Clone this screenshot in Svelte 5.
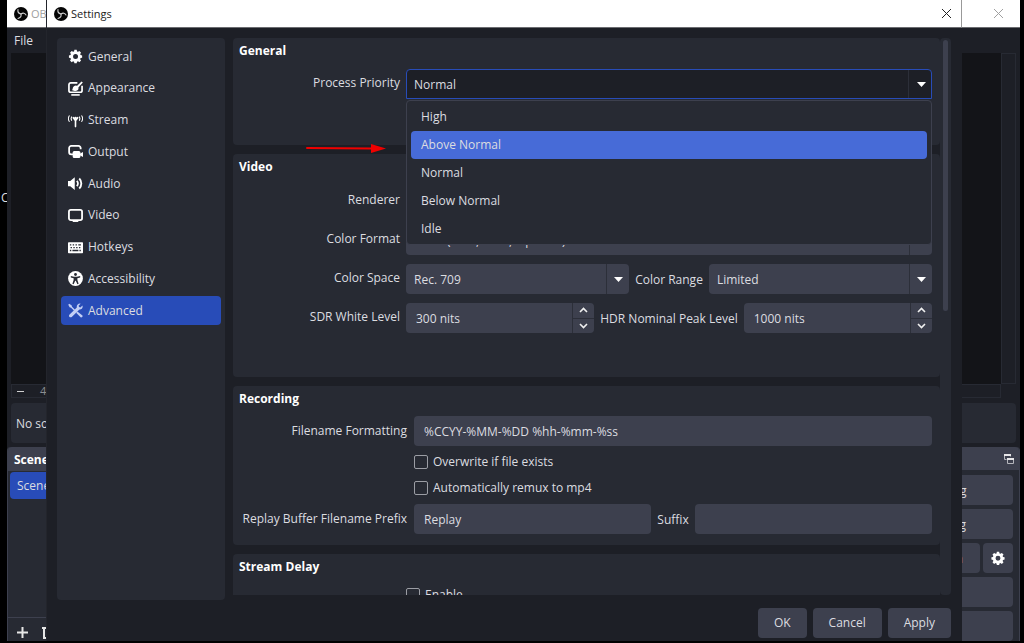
<script lang="ts">
	const pages = [
		{ id: 'general', label: 'General' },
		{ id: 'appearance', label: 'Appearance' },
		{ id: 'stream', label: 'Stream' },
		{ id: 'output', label: 'Output' },
		{ id: 'audio', label: 'Audio' },
		{ id: 'video', label: 'Video' },
		{ id: 'hotkeys', label: 'Hotkeys' },
		{ id: 'accessibility', label: 'Accessibility' },
		{ id: 'advanced', label: 'Advanced' }
	];
	const priorities = ['High', 'Above Normal', 'Normal', 'Below Normal', 'Idle'];

	let page = $state('advanced');
	let priority = $state('Normal');
	let hovered = $state('Above Normal');
	let open = $state(true);

	let sdrWhite = $state(300);
	let hdrPeak = $state(1000);
	let filename = $state('%CCYY-%MM-%DD %hh-%mm-%ss');
	let prefix = $state('Replay');
	let suffix = $state('');

	function choose(name: string) {
		priority = name;
		open = false;
	}
</script>

{#snippet logo()}
	<svg class="logo" viewBox="0 0 28 28" aria-hidden="true">
		<circle cx="14" cy="14" r="14" fill="#050505" />
		<g fill="none" stroke="#d0d0d0" stroke-width="2.2" stroke-linecap="round">
			<path d="M8 5c-1 5 1 8 6 9" />
			<path d="M14 14c4-3 8-2 10 2" />
			<path d="M14 14c1 5-1 8-6 9" />
		</g>
	</svg>
{/snippet}

{#snippet close()}
	<svg width="11" height="11" viewBox="0 0 11 11" aria-hidden="true">
		<path d="M1 1l9 9M10 1l-9 9" fill="none" stroke="currentColor" />
	</svg>
{/snippet}

{#snippet gear()}
	<path
		fill-rule="evenodd"
		d="M6.6 1h2.8l.4 1.9 1.2.5 1.7-1.1 2 2-1.1 1.7.5 1.2 1.9.4v2.8l-1.9.4-.5 1.2 1.1 1.7-2 2-1.7-1.1-1.2.5-.4 1.9H6.6l-.4-1.9-1.2-.5-1.7 1.1-2-2 1.1-1.7-.5-1.2L0 10.4V7.6l1.9-.4.5-1.2L1.3 4.3l2-2L5 3.4l1.2-.5zM8 5.800a3 3 0 1 0 0 6 3 3 0 0 0 0-6z"
	/>
{/snippet}

{#snippet icon(id: string)}
	<svg class="icon" viewBox="0 0 16 16" fill="currentColor" aria-hidden="true">
		{#if id === 'general'}
			<g transform="translate(1 0) scale(.88 .9)">{@render gear()}</g>
		{:else if id === 'appearance'}
			<path d="M10 2H3a2 2 0 0 0-2 2v6a2 2 0 0 0 2 2h10a2 2 0 0 0 2-2V5" fill="none" stroke="currentColor" stroke-width="1.8" />
			<path d="M14.4.4l1.4 1.2-5 5.6-1.8-1.4z" />
			<path d="M8.700 4.800a3.100 3.100 0 0 1 2.500 3.200c0 2-1.900 2.800-4 2.600-1.400-.1-2.500-.4-3.200-.9 1-.2.9-1.200 1.200-2.400.4-1.500 1.700-2.600 3.500-2.500z" />
			<path d="M3.500 14h9v1.700h-9z" />
		{:else if id === 'stream'}
			<g fill="none" stroke="currentColor" stroke-linecap="round">
				<path d="M1.400 3a5.500 5.500 0 0 0 0 6M14.600 3a5.500 5.500 0 0 1 0 6" stroke-width="1.100" />
				<path d="M3.800 4.200a3.600 3.600 0 0 0 0 3.600M12.200 4.200a3.600 3.600 0 0 1 0 3.600" stroke-width="1.200" />
				<path d="M5.700 5L8 8.200 10.300 5M8 8v6.500" stroke-width="1.700" />
			</g>
			<circle cx="8" cy="5.600" r="1.500" />
		{:else if id === 'output'}
			<path d="M6 11H3.500a2.300 2.300 0 0 1-2.300-2.300V4.300A2.300 2.300 0 0 1 3.500 2h7.700a2.300 2.300 0 0 1 2.300 2.300v1.200" fill="none" stroke="currentColor" stroke-width="1.900" />
			<rect x="5" y="7.400" width="8.200" height="7.400" rx="1.600" />
			<path d="M12.500 10.500L16 8.400v5.500l-3.500-2z" />
		{:else if id === 'audio'}
			<path d="M0 5.200h2.400L7.200 1.200v13.600l-4.800-4H0z" />
			<path d="M9.400 5.200a4 4 0 0 1 0 5.600M12 2.700a7.500 7.500 0 0 1 0 10.600" fill="none" stroke="currentColor" stroke-width="2" />
		{:else if id === 'video'}
			<rect x="1" y="2" width="14" height="11" rx="2" fill="none" stroke="currentColor" stroke-width="1.900" />
			<path d="M5 13.500h6v1.400H5z" />
		{:else if id === 'hotkeys'}
			<path
				fill-rule="evenodd"
				d="M.8 2.500h14.400q.8 0 .8.800v10q0 .8-.8.800H.8q-.8 0-.8-.8v-10q0-.8.8-.8zM2 4.500v1.300h1.500V4.500zm3 0v1.300h1.500V4.500zm3 0v1.300h1.500V4.500zm3 0v1.300h2.800V4.500zM2.700 7.500v1.300h1.500V7.500zm3 0v1.300h1.500V7.500zm3 0v1.300h1.500V7.500zm3 0v1.300h1.500V7.500zM2 10.500v1.400h1.500v-1.400zm2.700 0v1.400h6.400v-1.400zm7.500 0v1.400h1.500v-1.400z"
			/>
		{:else if id === 'accessibility'}
			<circle cx="8" cy="8" r="7.900" />
			<g fill="#272a33">
				<circle cx="8" cy="3.700" r="1.500" />
				<path d="M3 5.400l3.500.7h3L13 5.400v1.400l-3 .8v2l1.300 4-1.300.5-1.700-3.600h-.6L6 14.100l-1.300-.5 1.300-4v-2l-3-.8z" />
			</g>
		{:else}
			<path d="M1.200.9l2.600 1.400.5 1.700 3.400 3.400-1 1L3.300 5l-1.600-.6L.3 1.900z" />
			<path d="M13.400.7L11.300 3l.5 1.300 1.400.5 2.200-2.100c.9 2.500-.8 4.500-3.200 4.300L4 14.800c-1.500 1.300-3.800-.6-2.600-2.300l8-7.800C8.900 2.200 11.100.2 13.400.7z" />
			<path d="M10 9l5.400 4.300c.8 1-.9 2.700-1.900 1.900l-4.800-4.800z" />
		{/if}
	</svg>
{/snippet}

{#snippet caret()}
	<svg class="caret" viewBox="0 0 9 5" aria-hidden="true"><path d="M0 0h9L4.500 5z" fill="#fff" /></svg>
{/snippet}

{#snippet steps(change: (by: number) => void)}
	<span class="steps">
		<button type="button" aria-label="Increase" onclick={() => change(1)}>
			<svg width="9" height="6" viewBox="0 0 9 6"><path d="M1 5l3.500-3.500L8 5" /></svg>
		</button>
		<button type="button" aria-label="Decrease" onclick={() => change(-1)}>
			<svg width="9" height="6" viewBox="0 0 9 6"><path d="M1 1l3.500 3.500L8 1" /></svg>
		</button>
	</span>
{/snippet}

<div class="desktop">
	<span class="behind">C</span>

	<div class="main-window">
		<header class="titlebar inactive">
			{@render logo()}
			<span class="title">OBS</span>
			<button class="close" aria-label="Close OBS">{@render close()}</button>
		</header>
		<nav class="menubar"><a href="#file">File</a></nav>
		<div class="preview">
			<div class="canvas"></div>
			<div class="vbar"></div>
			<div class="hbar"><span class="minus"></span><span>46%</span></div>
		</div>
		<div class="context">No source selected</div>
		<div class="docks">
			<section class="dock scenes">
				<h2>Scenes</h2>
				<a class="scene" href="#scene">Scene</a>
				<div class="dock-tools">
					<svg width="13" height="13" viewBox="0 0 13 13"><path d="M6.500 1v11M1 6.500h11" /></svg>
					<svg width="12" height="13" viewBox="0 0 12 13"><path d="M0 2h12M2 2v10h8V2M4 1h4" /></svg>
				</div>
			</section>
			<section class="dock controls">
				<h2>
					<span>Controls</span>
					<svg width="10" height="10" viewBox="0 0 10 10" aria-hidden="true">
						<path d="M2.500 5.500h-2v-5h6v2M3.500 4.500h6v5h-6z" fill="none" stroke="#b5b6bc" />
						<path d="M0 0h7v2H0zM3 4h7v2H3z" fill="#e6e6e8" />
					</svg>
				</h2>
				<div class="control-list">
					<button>Start Streaming</button>
					<button>Start Recording</button>
					<div class="pair">
						<button>Start Virtual Camera</button>
						<button class="gear" aria-label="Configure virtual camera">
							<svg width="14" height="14" viewBox="0 0 16 17" fill="#fff">{@render gear()}</svg>
						</button>
					</div>
					<button>Studio Mode</button>
					<button aria-label="Open settings"></button>
				</div>
			</section>
		</div>
	</div>

	<div class="dialog" role="dialog" aria-label="Settings">
		<header class="titlebar">
			{@render logo()}
			<span class="title">Settings</span>
			<button class="close" aria-label="Close">{@render close()}</button>
		</header>

		<div class="body">
			<nav class="sidebar">
				<div class="pages">
					{#each pages as p}
						<button class:active={page === p.id} onclick={() => (page = p.id)}>
							{@render icon(p.id)}
							<span>{p.label}</span>
						</button>
					{/each}
				</div>
			</nav>

			<div class="scroller">
				<form class="groups">
					<section class="group general">
						<h3>General</h3>
						<div class="row">
							<label for="priority">Process Priority</label>
							<div class="combo" class:open>
								<select id="priority" bind:value={priority}>
									{#each priorities as name}
										<option>{name}</option>
									{/each}
								</select>
								{@render caret()}
								{#if open}
									<div class="popup" role="listbox" aria-label="Process Priority">
										{#each priorities as name}
											<button
												type="button"
												role="option"
												aria-selected={name === priority}
												class:hovered={hovered === name}
												onmouseenter={() => (hovered = name)}
												onclick={() => choose(name)}>{name}</button
											>
										{/each}
									</div>
								{/if}
							</div>
						</div>
					</section>

					<section class="group video">
						<h3>Video</h3>
						<div class="row">
							<label for="renderer">Renderer</label>
							<div class="combo">
								<select id="renderer"><option>Direct3D 11</option></select>
								{@render caret()}
							</div>
						</div>
						<div class="row">
							<label for="format">Color Format</label>
							<div class="combo">
								<select id="format"><option>NV12 (8-bit, 4:2:0, 2 planes)</option></select>
								{@render caret()}
							</div>
						</div>
						<div class="row">
							<label for="space">Color Space</label>
							<div class="fields">
								<div class="combo">
									<select id="space"><option>Rec. 709</option></select>
									{@render caret()}
								</div>
								<label for="range">Color Range</label>
								<div class="combo">
									<select id="range"><option>Limited</option></select>
									{@render caret()}
								</div>
							</div>
						</div>
						<div class="row">
							<label for="sdr">SDR White Level</label>
							<div class="fields">
								<div class="spin">
									<input id="sdr" type="text" value="{sdrWhite} nits" />
									{@render steps((by) => (sdrWhite += by))}
								</div>
								<label for="hdr">HDR Nominal Peak Level</label>
								<div class="spin">
									<input id="hdr" type="text" value="{hdrPeak} nits" />
									{@render steps((by) => (hdrPeak += by))}
								</div>
							</div>
						</div>
					</section>

					<section class="group recording">
						<h3>Recording</h3>
						<div class="row">
							<label for="filename">Filename Formatting</label>
							<input id="filename" type="text" bind:value={filename} />
						</div>
						<div class="row">
							<label class="check"><input type="checkbox" />Overwrite if file exists</label>
						</div>
						<div class="row">
							<label class="check"><input type="checkbox" />Automatically remux to mp4</label>
						</div>
						<div class="row">
							<label for="prefix">Replay Buffer Filename Prefix</label>
							<div class="fields">
								<input id="prefix" type="text" bind:value={prefix} />
								<label for="suffix">Suffix</label>
								<input id="suffix" type="text" bind:value={suffix} />
							</div>
						</div>
					</section>

					<section class="group">
						<h3>Stream Delay</h3>
						<div class="row">
							<label class="check"><input type="checkbox" />Enable</label>
						</div>
					</section>
				</form>
				<div class="scrollbar"><div class="thumb"></div></div>
			</div>
		</div>

		<footer>
			<button>OK</button>
			<button>Cancel</button>
			<button>Apply</button>
		</footer>
	</div>

	<svg class="arrow" width="80" height="10" viewBox="0 0 80 10" aria-hidden="true">
		<path d="M1 5l65 .5" stroke="#f00000" stroke-width="2" stroke-linecap="round" />
		<path d="M65 1l15 4.500L65 10z" fill="#f00000" />
	</svg>
</div>

<style>
	:global(body) {
		background: #000;
	}

	.desktop {
		position: relative;
		box-sizing: border-box;
		height: 100vh;
		padding: 0 4px 2px 7px;
		overflow: hidden;
		background: #000;
		color: #dcdde0;
		font: 12px/18px 'Open Sans', 'Noto Sans', sans-serif;
	}

	.desktop * {
		box-sizing: border-box;
	}

	button,
	input,
	select {
		margin: 0;
		border: 0;
		font: inherit;
		color: inherit;
	}

	h2,
	h3 {
		margin: 0;
		font-size: 12px;
		line-height: 18px;
		font-weight: 700;
		color: #fff;
	}

	.behind {
		position: absolute;
		left: 1px;
		top: 189px;
	}

	/* main window */
	.main-window {
		position: relative;
		display: flex;
		flex-direction: column;
		height: 100%;
		background: #1d1f26;
	}

	.titlebar {
		display: flex;
		align-items: center;
		gap: 3px;
		flex: none;
		height: 28px;
		padding: 0 10px 0 7px;
		background: #fff;
		border-bottom: 1px solid #6b6c70;
		color: #222;
		font-size: 11px;
	}

	.titlebar.inactive {
		padding-right: 16px;
		color: #a0a0a0;
	}

	.logo {
		width: 14px;
		height: 14px;
	}

	.title {
		flex: 1;
	}

	.close {
		display: flex;
		padding: 0;
		background: none;
	}

	.menubar {
		flex: none;
		height: 25px;
		padding: 4px 7px;
	}

	.menubar a {
		color: inherit;
		text-decoration: none;
	}

	.preview {
		flex: 1;
		display: grid;
		grid-template: 1fr 14px / 1fr 15px;
		margin: 0 4px 5px;
	}

	.canvas {
		background: #131418;
	}

	.vbar,
	.hbar {
		border: 1px solid #272a33;
	}

	.hbar {
		display: flex;
		align-items: center;
		gap: 16px;
		padding-left: 5px;
		color: #8c8d91;
		font-size: 11px;
	}

	.minus {
		width: 7px;
		height: 1px;
		background: #d0d0d0;
	}

	.context {
		flex: none;
		height: 40px;
		margin: 0 4px 4px;
		padding: 12px 5px;
		border-radius: 4px;
		background: #272a33;
	}

	.docks {
		display: flex;
		justify-content: space-between;
		flex: none;
		height: 194px;
	}

	.dock {
		display: flex;
		flex-direction: column;
		border: 1px solid #3d404e;
		border-width: 0 1px;
		border-radius: 4px 4px 0 0;
		background: #272a33;
	}

	.dock h2 {
		display: flex;
		justify-content: space-between;
		align-items: center;
		height: 24px;
		padding: 1px 5px 0 6px;
		border-radius: 4px 4px 0 0;
		background: #3d404e;
	}

	.scenes {
		width: 196px;
	}

	.scene {
		height: 27px;
		margin: 1px 2px;
		padding: 5px 7px;
		border-radius: 4px;
		background: #284cb8;
		color: inherit;
		text-decoration: none;
	}

	.dock-tools {
		display: flex;
		gap: 13px;
		align-items: center;
		height: 24px;
		margin-top: auto;
		padding: 6px 8px 0;
		border-top: 1px solid #3d404e;
	}

	.dock-tools path {
		fill: none;
		stroke: #e6e6e6;
		stroke-width: 2;
	}

	.controls {
		width: 188px;
	}

	.control-list {
		display: grid;
		gap: 4px;
		padding: 5px 6px 0 0;
	}

	.control-list button,
	footer button {
		height: 30px;
		border-radius: 4px;
		background: #3d404e;
	}

	.control-list button {
		padding-top: 3px;
		white-space: nowrap;
	}

	.pair {
		display: grid;
		grid-template-columns: 1fr 30px;
		gap: 3px;
	}

	.control-list .gear {
		display: grid;
		place-items: center;
		padding: 0;
	}

	/* settings dialog */
	.dialog {
		position: absolute;
		inset: 0 62px 2px 46px;
		display: flex;
		flex-direction: column;
		border-left: 1px solid #23252c;
		background: #1d1f26;
	}

	.dialog .titlebar {
		border-right: 1px solid #999;
		padding-right: 9px;
	}

	.body {
		flex: 1;
		display: grid;
		grid-template-columns: 168px minmax(0, 1fr);
		grid-template-rows: 100%;
		gap: 8px;
		min-height: 0;
		padding: 10px 11px 0 10px;
	}

	.sidebar {
		padding: 4px;
		border-radius: 4px;
		background: #272a33;
	}

	.pages {
		display: flex;
		flex-direction: column;
		justify-content: space-between;
		height: 283px;
	}

	.sidebar button {
		display: flex;
		align-items: center;
		gap: 5px;
		flex: none;
		height: 29px;
		padding: 0 7px;
		border-radius: 4px;
		background: none;
		color: #fff;
	}

	.sidebar span {
		color: #dcdde0;
	}

	.sidebar .active {
		background: #284cb8;
		color: #c3cff5;
	}

	.icon {
		width: 15px;
		height: 15px;
	}

	.scroller {
		display: grid;
		grid-template-columns: minmax(0, 1fr) 11px;
		margin-bottom: 5px;
		overflow: hidden;
	}

	.groups {
		display: flex;
		flex-direction: column;
		gap: 9px;
		min-height: 0;
	}

	.group {
		display: flex;
		flex-direction: column;
		gap: 9px;
		flex: none;
		padding: 4px 8px 11px 6px;
		border-radius: 4px;
		background: #272a33;
	}

	.general {
		min-height: 107px;
	}

	.video {
		min-height: 223px;
	}

	.recording {
		gap: 6px;
	}

	.video h3 {
		margin-bottom: 1px;
	}

	.recording h3 {
		margin-bottom: 2px;
	}

	.row {
		display: grid;
		grid-template-columns: 161px minmax(0, 1fr);
		gap: 6px;
	}

	.recording .row {
		grid-template-columns: 168px minmax(0, 1fr);
		gap: 7px;
	}

	.row > label {
		padding: 5px 0;
		text-align: right;
		white-space: nowrap;
	}

	.recording .row > label {
		padding: 6px 0;
	}

	.row > .check,
	.recording .row > .check {
		grid-column: 2;
		display: flex;
		align-items: center;
		gap: 5px;
		height: 20px;
		padding: 0;
	}

	.check input {
		appearance: none;
		width: 14px;
		height: 14px;
		border: 1px solid #9b9da4;
		border-radius: 2px;
	}

	.fields {
		display: flex;
		align-items: center;
		gap: 6px;
	}

	.fields > label {
		padding-top: 1px;
		white-space: nowrap;
	}

	.combo,
	.spin,
	.fields > input {
		flex: 1 1 0;
		min-width: 0;
	}

	.combo {
		position: relative;
		display: flex;
		height: 30px;
	}

	select {
		appearance: none;
		width: 100%;
		padding: 2px 24px 0 8px;
		border-radius: 4px;
		background: linear-gradient(#2c2f39, #2c2f39) right 22px top / 1px 100% no-repeat #3d404e;
		outline: none;
	}

	.caret {
		position: absolute;
		right: 6px;
		top: 13px;
		width: 9px;
		height: 5px;
	}

	.open select {
		padding: 2px 23px 0 7px;
		border: 1px solid #284cb8;
		border-radius: 4px 4px 0 0;
		background-color: #1d1f26;
	}

	.popup {
		position: absolute;
		z-index: 1;
		top: 100%;
		left: 0;
		right: 0;
		display: flex;
		flex-direction: column;
		margin-top: 1px;
		padding: 2px 4px 1px;
		border: 1px solid #3d404e;
		border-radius: 4px;
		background: #272a33;
	}

	.popup button {
		height: 28px;
		padding: 0 10px;
		border-radius: 4px;
		background: none;
		text-align: left;
	}

	.popup .hovered {
		background: #476bd7;
	}

	input[type='text'] {
		height: 30px;
		padding: 0 10px;
		border-radius: 4px;
		background: #3d404e;
		outline: none;
	}

	.spin {
		display: flex;
	}

	.spin input[type='text'] {
		flex: 1;
		min-width: 0;
		border-radius: 4px 0 0 4px;
	}

	.steps {
		display: grid;
		grid-template-rows: 1fr 1fr;
		row-gap: 1px;
		width: 22px;
		padding-left: 1px;
		background: #2c2f39;
		border-radius: 0 4px 4px 0;
		overflow: hidden;
	}

	.steps button {
		display: grid;
		place-items: center;
		padding: 0;
		background: #3d404e;
	}

	.steps path {
		fill: none;
		stroke: #f0f0f0;
		stroke-width: 1.6;
	}

	.scrollbar {
		padding: 2px 3px;
		border-radius: 4px;
		background: #272a33;
	}

	.thumb {
		width: 5px;
		height: 49%;
		border-radius: 3px;
		background: #3d404e;
	}

	footer {
		display: flex;
		justify-content: flex-end;
		gap: 6px;
		padding: 8px 11px 3px;
	}

	footer button {
		padding: 0 16px;
	}

	.arrow {
		position: absolute;
		left: 306px;
		top: 143px;
	}
</style>
